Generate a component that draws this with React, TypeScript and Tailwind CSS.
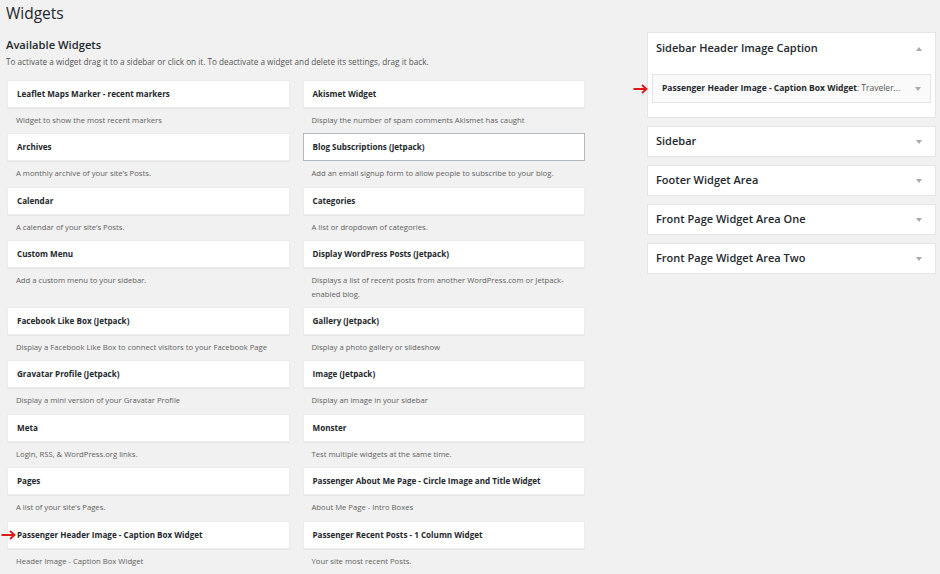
const WIDGETS: [string, string][] = [
  ["Leaflet Maps Marker - recent markers", "Widget to show the most recent markers"],
  ["Akismet Widget", "Display the number of spam comments Akismet has caught"],
  ["Archives", "A monthly archive of your site’s Posts."],
  ["Blog Subscriptions (Jetpack)", "Add an email signup form to allow people to subscribe to your blog."],
  ["Calendar", "A calendar of your site’s Posts."],
  ["Categories", "A list or dropdown of categories."],
  ["Custom Menu", "Add a custom menu to your sidebar."],
  ["Display WordPress Posts (Jetpack)", "Displays a list of recent posts from another WordPress.com or Jetpack-\nenabled blog."],
  ["Facebook Like Box (Jetpack)", "Display a Facebook Like Box to connect visitors to your Facebook Page"],
  ["Gallery (Jetpack)", "Display a photo gallery or slideshow"],
  ["Gravatar Profile (Jetpack)", "Display a mini version of your Gravatar Profile"],
  ["Image (Jetpack)", "Display an image in your sidebar"],
  ["Meta", "Login, RSS, & WordPress.org links."],
  ["Monster", "Test multiple widgets at the same time."],
  ["Pages", "A list of your site’s Pages."],
  ["Passenger About Me Page - Circle Image and Title Widget", "About Me Page - Intro Boxes"],
  ["Passenger Header Image - Caption Box Widget", "Header Image - Caption Box Widget"],
  ["Passenger Recent Posts - 1 Column Widget", "Your site most recent Posts."],
];

const AREAS = ["Sidebar", "Footer Widget Area", "Front Page Widget Area One", "Front Page Widget Area Two"];

function RedArrow() {
  return (
    <svg width="15" height="10" viewBox="0 0 15 10" fill="none">
      <path d="M0.5 5H13.5M9 1L13.5 5L9 9" stroke="#e0191b" strokeWidth="1.9" />
    </svg>
  );
}

function Caret({ up = false }: { up?: boolean }) {
  return (
    <svg width="6" height="4" viewBox="0 0 6 4">
      <path d={up ? "M0 4L3 0L6 4Z" : "M0 0L6 0L3 4Z"} fill="#a9a9a9" />
    </svg>
  );
}

export default function App() {
  return (
    <div className="min-h-[574px] w-[940px] bg-[#f1f1f1] font-['Open_Sans',sans-serif] text-[#23282d] overflow-hidden">
      <h1 className="pl-[6px] pt-[2px] h-[32px] text-[15.5px] leading-[22px]">Widgets</h1>

      <div className="flex">
        {/* Available widgets */}
        <div className="w-[585px] pl-[7px]">
          <h2 className="-ml-px mt-[5px] text-[11.2px] font-semibold leading-[16px]">Available Widgets</h2>
          <p className="-ml-px mt-[2px] text-[8.2px] leading-[13px] text-[#555]">
            To activate a widget drag it to a sidebar or click on it. To deactivate a widget and delete its settings, drag it back.
          </p>

          <div className="mt-[12px] grid grid-cols-2 gap-x-[13px]">
            {WIDGETS.map(([title, desc], i) => (
              <div key={title} className="relative flex flex-col">
                <div
                  className={`h-[28px] flex items-center px-[9px] bg-white text-[8.1px] font-bold ${
                    i === 3
                      ? "border border-[#b4b9be]"
                      : "border border-[#ececec] shadow-[0_1px_1px_rgba(0,0,0,0.04)]"
                  }`}
                >
                  {title}
                </div>
                <div className="px-[9px] pt-[6px] pb-[6px] text-[7.7px] leading-[13.4px] text-[#616161] whitespace-pre-line">
                  {desc}
                </div>
                {i === 16 && (
                  <div className="absolute -left-[6px] top-[9px]">
                    <RedArrow />
                  </div>
                )}
              </div>
            ))}
          </div>
        </div>

        {/* Sidebars */}
        <div className="ml-[62px] w-[289px] flex flex-col gap-[8px]">
          <div className="bg-white border border-[#e5e5e5] pb-[14px]">
            <div className="h-[31px] flex items-center justify-between pl-[8px] pr-[13px]">
              <span className="text-[11px] font-semibold">Sidebar Header Image Caption</span>
              <Caret up />
            </div>
            <div className="relative mx-[4px] mt-[10px] h-[29px] flex items-center justify-between pl-[9px] pr-[9px] bg-[#fafafa] border border-[#e5e5e5]">
              <span className="text-[8.5px] font-bold">
                Passenger Header Image - Caption Box Widget<span className="font-normal text-[#555]">: Traveler...</span>
              </span>
              <Caret />
              <div className="absolute -left-[20px] top-[9px]">
                <RedArrow />
              </div>
            </div>
          </div>

          {AREAS.map((a) => (
            <div key={a} className="h-[31px] bg-white border border-[#e5e5e5] flex items-center justify-between pl-[8px] pr-[13px]">
              <span className="text-[11px] font-semibold">{a}</span>
              <Caret />
            </div>
          ))}
        </div>
      </div>
    </div>
  );
}
